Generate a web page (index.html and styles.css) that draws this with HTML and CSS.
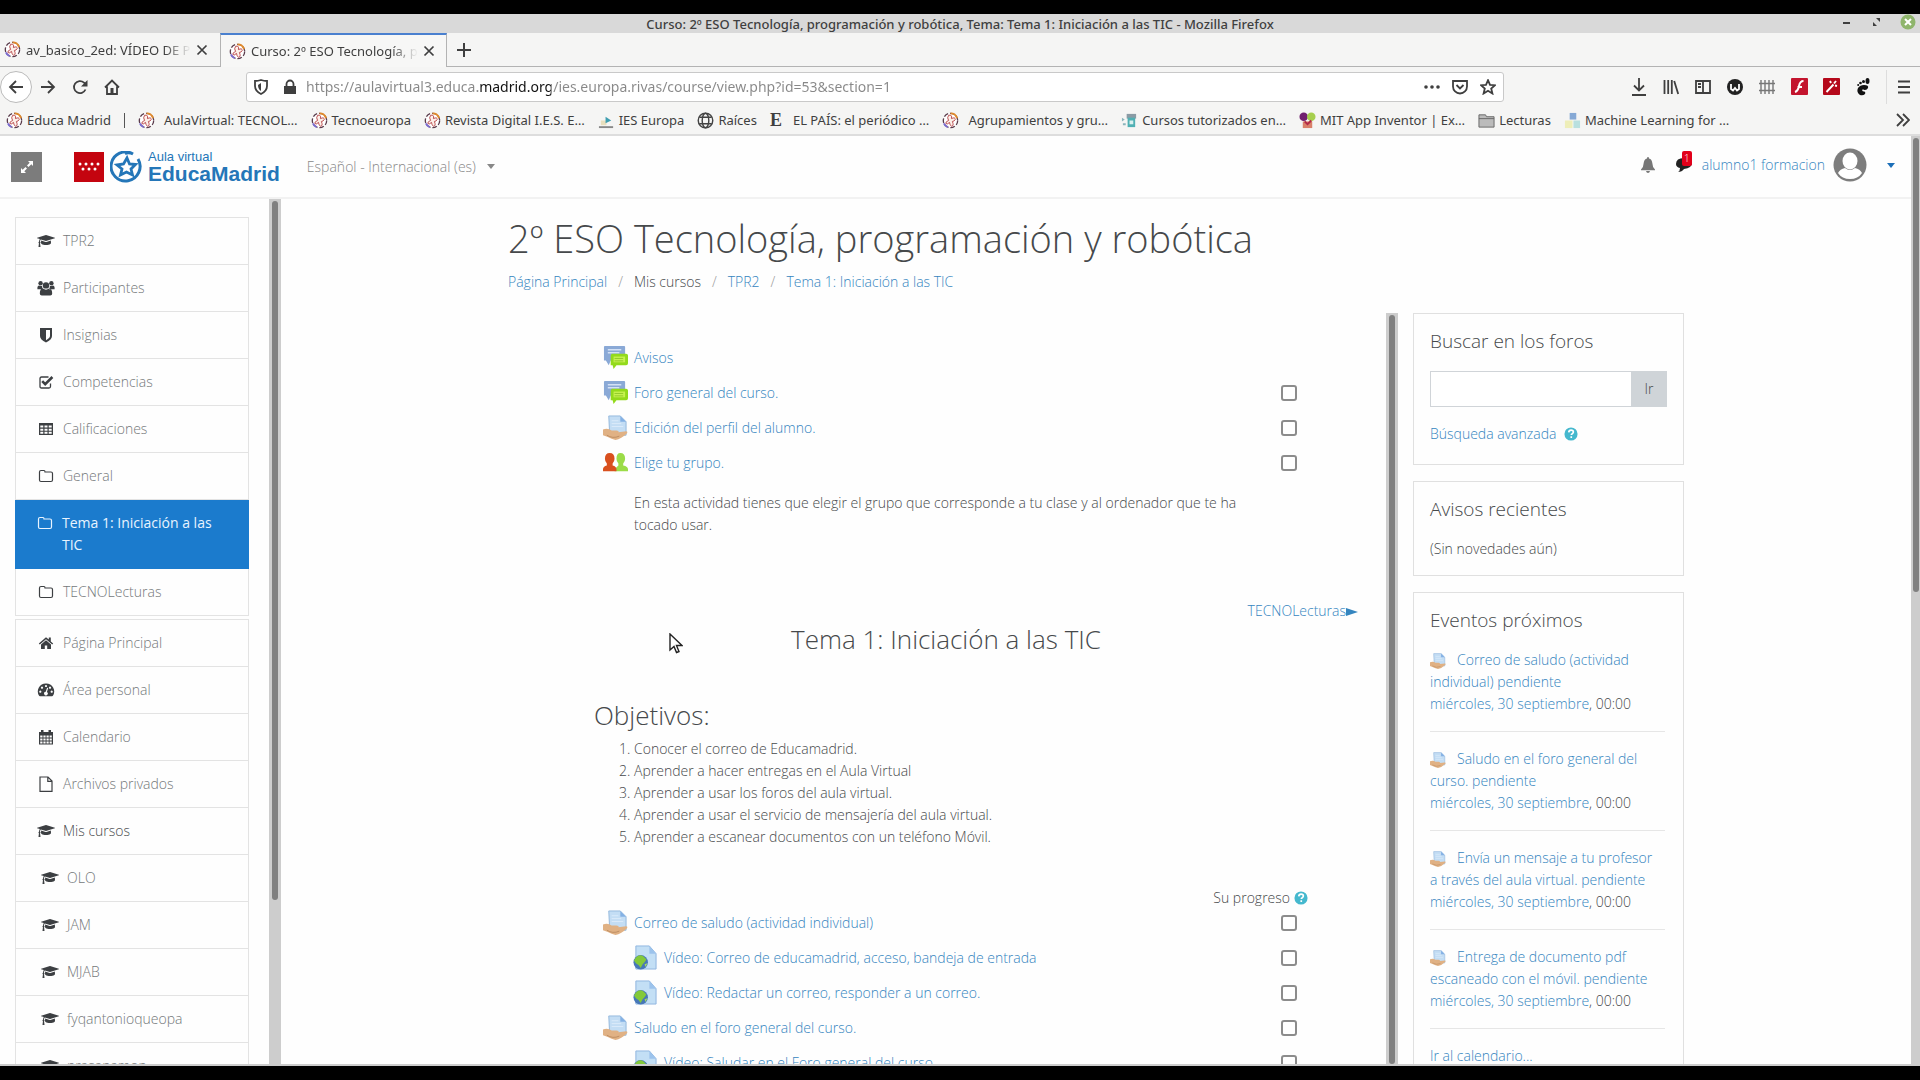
FILE: index.html
```html
<!DOCTYPE html>
<html lang="es">
<head>
    <meta charset="UTF-8">
    <meta name="viewport" content="width=device-width, initial-scale=1.0">
    <title>Curso: 2º ESO Tecnología, programación y robótica, Tema: Tema 1: Iniciación a las TIC</title>
    <link rel="stylesheet" href="styles.css">
</head>
<body>
<!-- iconos -->
<svg class="sprite" aria-hidden="true">
    <symbol id="i-cap" viewBox="0 0 2304 1792"><path d="M1774 836l18 316q4 69-82 128t-235 93.500-323 34.500-323-34.500-235-93.500-82-128l18-316 574 181q22 7 48 7t48-7zM2304 512q0 23-22 31l-1120 352q-4 1-10 1t-10-1l-652-206q-43 34-71 111.500t-34 178.500q63 36 63 109 0 69-58 107l58 433q2 14-8 25-9 11-24 11h-192q-15 0-24-11-10-11-8-25l58-433q-58-38-58-107 0-73 65-111 11-207 98-330l-333-104q-22-8-22-31t22-31l1120-352q4-1 10-1t10 1l1120 352q22 8 22 31z"/></symbol>
    <symbol id="i-users" viewBox="0 0 18 16"><circle cx="3.600" cy="3.200" r="2.200"/><circle cx="14.400" cy="3.200" r="2.200"/><circle cx="9" cy="5.400" r="3.200"/><path d="M.4 9.400V7.600Q.6 5.400 2.200 5.400q1.200 1 2.900.5-.1 2 1 3.300H.4zM17.600 9.400V7.600q-.2-2.200-1.800-2.200-1.200 1-2.900.5.100 2-1 3.300h5.700zM2.800 13.600q0-4.800 3.100-5 3.100 2.200 6.200 0 3.100.2 3.100 5 0 2-2 2H4.800q-2 0-2-2z"/></symbol>
    <symbol id="i-shield" viewBox="0 0 16 16"><path fill-rule="evenodd" d="M2 1h12v8q0 3.500-6 6.500Q2 12.500 2 9zM8 3v10.200q4-2.200 4-4.200V3z"/></symbol>
    <symbol id="i-check" viewBox="0 0 16 16"><path d="M12.500 9.500v3q0 1.500-1.500 1.500H3.500Q2 14 2 12.500V4.500Q2 3 3.500 3h7" fill="none" stroke="currentColor" stroke-width="1.300"/><path d="M4.200 7.200l3 3L14.400 3" fill="none" stroke="currentColor" stroke-width="2.600"/></symbol>
    <symbol id="i-table" viewBox="0 0 16 16"><path fill-rule="evenodd" d="M1 2h14v12H1zM2.300 4.600v2h3v-2zm4.200 0v2h3v-2zm4.200 0v2h3v-2zM2.300 7.700v2h3v-2zm4.200 0v2h3v-2zm4.200 0v2h3v-2zM2.300 10.800v2h3v-2zm4.200 0v2h3v-2zm4.200 0v2h3v-2z"/></symbol>
    <symbol id="i-folder" viewBox="0 0 16 16"><path d="M1.500 4q0-1.500 1.500-1.500h3Q7 2.500 7 4h6q1.500 0 1.500 1.500V12q0 1.500-1.500 1.500H3Q1.500 13.500 1.500 12z" fill="none" stroke="currentColor" stroke-width="1.200"/></symbol>
    <symbol id="i-home" viewBox="0 0 16 16"><path d="M8 2.200L.8 8.600l1 1L8 4.200l6.200 5.400 1-1-2.400-2.200V2.600h-2v2zM8 5.300L3 9.600V14h3.800v-3.600h2.400V14H13V9.600z"/></symbol>
    <symbol id="i-dash" viewBox="0 0 18 16"><path fill-rule="evenodd" d="M9 1.500a8 8 0 0 1 6.900 12.300q-.3.400-.8.400H2.900q-.5 0-.8-.4A8 8 0 0 1 9 1.500zM9 2.900a1.100 1.100 0 1 0 .01 0zM5 4.600a1.100 1.100 0 1 0 .01 0zM13 4.600a1.100 1.100 0 1 0 .01 0zM3.300 8.600a1.100 1.100 0 1 0 .01 0zM14.700 8.600a1.100 1.100 0 1 0 .01 0zM10.100 5.800L8.700 9.700A1.800 1.800 0 1 0 9.900 10l1.300-3.900z"/></symbol>
    <symbol id="i-cal" viewBox="0 0 16 16"><path fill-rule="evenodd" d="M1 3h2V1h2.500v2h5V1H13v2h2v12.500H1zM2.200 6.400v2h2.300v-2zm3.200 0v2h2.200v-2zm3.100 0v2h2.200v-2zm3.100 0v2h2.200v-2zM2.200 9.400v2h2.300v-2zm3.200 0v2h2.200v-2zm3.100 0v2h2.200v-2zm3.100 0v2h2.200v-2zM2.200 12.400v2h2.300v-2zm3.200 0v2h2.200v-2zm3.100 0v2h2.200v-2zm3.100 0v2h2.200v-2z"/></symbol>
    <symbol id="i-file" viewBox="0 0 16 16"><path d="M2 1h8l4 4v10.300H2zM9.800 1v4.300H14" fill="none" stroke="currentColor" stroke-width="1.200"/></symbol>
    <symbol id="i-forum" viewBox="0 0 26 24"><path d="M2 0h20q1 0 1 1v14H8l-2 5-3-5H1V1q0-1 1-1z" fill="#8aa9d6"/><path d="M5 4h14M5 7h12" stroke="#d3e1f5" stroke-width="1.500"/><path d="M9 8h15q2 0 2 2v8q0 2-2 2H14l-3 4-1-4H8V10z" fill="#93da1c"/><path d="M11 11h12v6H11z" fill="#c6f250"/><path d="M12 13h9M12 15.500h9" stroke="#8fc92a"/></symbol>
    <symbol id="i-assign" viewBox="0 0 26 26"><path d="M6 1h12l6 6v14H7z" fill="#c3ddf4" stroke="#93b7dc"/><path d="M18 1v6h6z" fill="#84b1e4"/><path d="M9 6h7M9 9h10M9 12h12" stroke="#dcebfa"/><path d="M0 15q5-2 9 1h5q3 0 2 2l8-1q2 0 1 2-6 6-12 7-4-1-8-3l-5-2z" fill="#e0b184"/><path d="M4 21q6 4 13 1" stroke="#bd8e63" fill="none"/></symbol>
    <symbol id="i-url" viewBox="0 0 26 26"><path d="M3 1h14l7 8v16H3z" fill="#c3dff5" stroke="#8fb4df"/><path d="M17 1v8h7z" fill="#9cc3ec"/><circle cx="8" cy="18" r="7.500" fill="#4777b8"/><path d="M3 13q4-4 8-1l3 3-2 3-2 2-2 4-2-3-3-2-2-3z" fill="#83c93a"/><path d="M12 20l3-1-2 4z" fill="#a7dd5c"/></symbol>
    <symbol id="i-groups" viewBox="0 0 26 20"><path d="M18 0q5 0 5 6 0 3-2 5v2q5 1 5 4v2H12v-2l4-4v-2q-2-2-2-5 0-6 4-6z" fill="#9bdc48"/><path d="M7 0q5 0 5 6 0 3-2 5v2q4 1 4 4v2H0v-2q0-3 4-4v-2Q2 9 2 6q0-6 5-6z" fill="#d9501e"/></symbol>
    <symbol id="i-help" viewBox="0 0 16 16"><circle cx="8" cy="8" r="7.500" fill="#45b8ce"/><path d="M5.400 6.200q.2-2.600 2.700-2.600 2.600 0 2.600 2.200 0 1.200-1.300 1.900-1 .5-1 1.500M8.300 10.600v2" fill="none" stroke="#fff" stroke-width="1.900"/></symbol>
    <symbol id="i-fav" viewBox="0 0 18 18"><circle cx="9" cy="9" r="7.600" fill="#fff" stroke="#5a3c4c" stroke-width="1.400" stroke-dasharray="5 2"/><path d="M9 1.500a7.500 7.500 0 0 1 7 5" fill="none" stroke="#e08a2c" stroke-width="2"/><path d="M2 12a7.500 7.500 0 0 0 4 4" fill="none" stroke="#7a6bd0" stroke-width="2"/><path d="M7 3.500q4-1 3 3.500 4-2 4 1-1 2-3 2 2 5-1 5-2-1-2-4-3 3-4 1 0-2 3-3-2-3 0-5.500z" fill="#fdf1ea" stroke="#b8474a" stroke-width="1"/></symbol>
    <symbol id="i-caret" viewBox="0 0 8 5"><path d="M0 0h8L4 5z"/></symbol>
    <symbol id="i-x" viewBox="0 0 12 12"><path d="M1.500 1.500l9 9m0-9l-9 9" fill="none" stroke="currentColor" stroke-width="1.700"/></symbol>
</svg>

<div class="titlebar">
    <span class="titlebar-text">Curso: 2º ESO Tecnología, programación y robótica, Tema: Tema 1: Iniciación a las TIC - Mozilla Firefox</span>
    <div class="win-buttons">
        <button aria-label="Minimizar"><svg width="14" height="14" viewBox="0 0 14 14"><path d="M3 7h7v2H3z"/></svg></button>
        <button aria-label="Restaurar"><svg width="14" height="14" viewBox="0 0 14 14"><path d="M6 3h4v4zM3 7v4h4z"/></svg></button>
        <button aria-label="Cerrar"><svg width="16" height="16" viewBox="0 0 16 16"><circle cx="8" cy="8" r="7.500" fill="#8fb56c"/><path d="M5 5l6 6m0-6l-6 6" stroke="#fff" stroke-width="2"/></svg></button>
    </div>
</div>

<div class="tabs">
    <div class="tab">
        <svg class="fav"><use href="#i-fav"/></svg>
        <span class="tab-title">av_basico_2ed: VÍDEO DE P</span>
        <button aria-label="Cerrar pestaña"><svg width="12" height="12"><use href="#i-x"/></svg></button>
    </div>
    <div class="tab tab-active">
        <svg class="fav"><use href="#i-fav"/></svg>
        <span class="tab-title">Curso: 2º ESO Tecnología, p</span>
        <button aria-label="Cerrar pestaña"><svg width="12" height="12"><use href="#i-x"/></svg></button>
    </div>
    <button class="tab-new" aria-label="Nueva pestaña"><svg width="14" height="14" viewBox="0 0 14 14"><path d="M7 0v14M0 7h14" stroke="currentColor" stroke-width="2"/></svg></button>
</div>

<div class="toolbar">
    <div class="nav-buttons">
        <button class="back" aria-label="Atrás"><svg width="16" height="16" viewBox="0 0 16 16"><path d="M15 8H2m6-6L2 8l6 6" class="ln"/></svg></button>
        <button aria-label="Adelante"><svg width="16" height="16" viewBox="0 0 16 16"><path d="M1 8h13M8 2l6 6-6 6" class="ln"/></svg></button>
        <button aria-label="Recargar"><svg width="16" height="16" viewBox="0 0 16 16"><path d="M13.500 10.500A6 6 0 1 1 12 3.600L14 5.500" class="ln"/><path d="M15.500 1v6.500H9z"/></svg></button>
        <button aria-label="Inicio"><svg width="16" height="16" viewBox="0 0 16 16"><path d="M1 8.500L8 1.500l7 7M3 7.500V15h10V7.500" class="ln"/><path d="M6.500 9h3v6h-3z"/></svg></button>
    </div>
    <div class="urlbar">
        <svg class="shield" width="14" height="16" viewBox="0 0 14 16"><path d="M1 2q3 0 6-1 3 1 6 1v5q0 5-6 8-6-3-6-8z" class="ln"/><path d="M7 4v8Q4 10 4 6z"/></svg>
        <svg class="lock" width="14" height="16" viewBox="0 0 14 16"><path d="M1 7h12v8H1z"/><path d="M3.500 8V5a3.500 3.500 0 0 1 7 0v3" class="ln"/></svg>
        <input type="text" aria-label="Dirección" value="https://aulavirtual3.educa.madrid.org/ies.europa.rivas/course/view.php?id=53&amp;section=1">
        <div class="url-actions">
            <button aria-label="Acciones de página"><svg width="16" height="16" viewBox="0 0 16 16"><circle cx="2" cy="8" r="1.800"/><circle cx="8" cy="8" r="1.800"/><circle cx="14" cy="8" r="1.800"/></svg></button>
            <button aria-label="Pocket"><svg width="16" height="16" viewBox="0 0 16 16"><path d="M1 2h14v5.500a7 7 0 0 1-14 0zM4.500 6L8 9.500 11.500 6" class="ln"/></svg></button>
            <button aria-label="Marcador"><svg width="16" height="16" viewBox="0 0 16 16"><path d="M8 1.200l2 4.600 5 .4-3.800 3.300 1.200 5L8 11.800l-4.400 2.700 1.200-5L1 6.200l5-.4z" class="ln"/></svg></button>
        </div>
    </div>
    <div class="ext-buttons">
        <button aria-label="Descargas"><svg width="16" height="18" viewBox="0 0 16 18"><path d="M8 0v12M3 7.500l5 5 5-5M1 17h14" class="ln"/></svg></button>
        <button aria-label="Biblioteca"><svg width="16" height="16" viewBox="0 0 16 16"><path d="M1.500 1v14M5.200 1v14M8.800 1v14M11.200 2l4 13" class="ln"/></svg></button>
        <button aria-label="Barras laterales"><svg width="16" height="16" viewBox="0 0 16 16"><path d="M1 2h14v12H1zM8 2v12M3 5h3M3 8h3" class="ln"/></svg></button>
        <button aria-label="Complemento"><svg width="18" height="18" viewBox="0 0 18 18"><circle cx="9" cy="9" r="8" fill="#222"/><path d="M5 6v5l2 1.500L9 10l2 2.500 2-1.500V6" fill="none" stroke="#fff" stroke-width="1.800"/></svg></button>
        <button aria-label="Contenedores"><svg width="16" height="16" viewBox="0 0 16 16"><path d="M2 1v14M6 1v14M10 1v14M14 1v14M0 4.500h16M0 11.500h16" stroke="#777" stroke-width="1.400"/></svg></button>
        <button aria-label="Flash"><svg width="17" height="17" viewBox="0 0 17 17"><rect width="17" height="17" rx="1" fill="#c3142d"/><path d="M12.500 3Q9 3 8 8t-4 6M6.500 9h4.500" fill="none" stroke="#fff" stroke-width="2"/></svg></button>
        <button aria-label="Varita"><svg width="17" height="17" viewBox="0 0 17 17"><rect width="17" height="17" rx="1" fill="#b5091b"/><path d="M3.500 14l7-7.500M7 3l1 2M13 3l-2 2.500M14 8l-2-.5" stroke="#fff" stroke-width="1.900"/></svg></button>
        <button aria-label="GNOME"><svg width="16" height="18" viewBox="0 0 16 18"><g fill="#111"><path d="M9 7q5 0 4 3-1 2-3 2-2 0-2-1-2 2 1 2.500 2 .5 1 2.500-2 2-5 1-4-3-2-7 2-3 6-3z"/><ellipse cx="12.500" cy="3" rx="2" ry="3"/><circle cx="8.500" cy="3.500" r="1.500"/><circle cx="5.500" cy="5" r="1.300"/><circle cx="3.200" cy="7" r="1"/></g></svg></button>
        <button class="menu" aria-label="Menú"><svg width="14" height="14" viewBox="0 0 14 14"><path d="M1 1.500h12M1 7h12M1 12.500h12" class="ln"/></svg></button>
    </div>
</div>

<nav class="bookmarks">
    <a href="#"><svg class="fav"><use href="#i-fav"/></svg>Educa Madrid</a>
    <span class="bm-sep"></span>
    <a href="#" class="bm-wide"><svg class="fav"><use href="#i-fav"/></svg>AulaVirtual: TECNOL…</a>
    <a href="#"><svg class="fav"><use href="#i-fav"/></svg>Tecnoeuropa</a>
    <a href="#"><svg class="fav"><use href="#i-fav"/></svg>Revista Digital I.E.S. E…</a>
    <a href="#"><svg class="fav" viewBox="0 0 18 18"><path d="M1 15h15v2H1z" fill="#888"/><path d="M3 9h6v5H3z" fill="#e8dfbd"/><path d="M8 5l6 4-6 3z" fill="#3f9eb0"/></svg>IES Europa</a>
    <a href="#"><svg class="fav" viewBox="0 0 18 18"><g fill="none" stroke="#444" stroke-width="1.500"><circle cx="9" cy="9" r="7.700"/><ellipse cx="9" cy="9" rx="3.500" ry="7.700"/><path d="M2.500 5.500h13M2.500 12.500h13"/></g></svg>Raíces</a>
    <a href="#" class="bm-wide"><b class="bm-e">E</b>EL PAÍS: el periódico …</a>
    <a href="#" class="bm-wide"><svg class="fav"><use href="#i-fav"/></svg>Agrupamientos y gru…</a>
    <a href="#"><svg class="fav" viewBox="0 0 18 18"><path d="M6 2h10v5H6z" fill="#8a9ba5"/><path d="M7 6h8v10H7z" fill="#4fb0b3"/><path d="M1 6l3 2-3 2zM2 12h3v2H2z" fill="#8ab5bb"/><path d="M9 9h4v4H9z" fill="#d9f0ef"/></svg>Cursos tutorizados en…</a>
    <a href="#"><svg class="fav" viewBox="0 0 18 18"><circle cx="5" cy="5" r="4.500" fill="#70206e"/><circle cx="13" cy="5" r="4.500" fill="#a6cf4e"/><path d="M4 10h10v7H4z" fill="#d9806a"/><path d="M6 10l3 3 4-4" stroke="#b12a48" stroke-width="2" fill="none"/></svg>MIT App Inventor | Ex…</a>
    <a href="#"><svg class="fav" viewBox="0 0 18 18"><path d="M1 3h7l1 2h8v11H1z" fill="#bbb" stroke="#666"/><path d="M1 7h16" stroke="#666"/></svg>Lecturas</a>
    <a href="#"><svg class="fav" viewBox="0 0 18 18"><path d="M6 1h7v7H6z" fill="#86a9d5"/><path d="M1 9h8v8H1z" fill="#eeeeb8"/><path d="M10 9h7v8h-7z" fill="#b9e0df"/></svg>Machine Learning for …</a>
    <button class="bm-more" aria-label="Más marcadores"><svg width="14" height="14" viewBox="0 0 14 14"><path d="M1 1l6 6-6 6M7 1l6 6-6 6" class="ln"/></svg></button>
</nav>

<div class="viewport">
    <div class="page">
        <header class="page-header">
            <button class="full" aria-label="Pantalla completa"><svg width="16" height="16" viewBox="0 0 16 16"><path d="M9 2h5v5l-1.700-1.700L9.500 8 8 6.500l2.700-2.800zM7 14H2V9l1.700 1.700L6.500 8 8 9.500l-2.700 2.800z" fill="#fff"/></svg></button>
            <a href="#" class="logo">
                <svg width="30" height="30" viewBox="0 0 30 30"><path d="M0 0h30v30H0z" fill="#c4040f"/><g fill="#fff"><circle cx="6" cy="12" r="1.500"/><circle cx="12" cy="12" r="1.500"/><circle cx="18" cy="12" r="1.500"/><circle cx="24" cy="12" r="1.500"/><circle cx="9" cy="17" r="1.500"/><circle cx="15" cy="17" r="1.500"/><circle cx="21" cy="17" r="1.500"/></g></svg>
                <svg width="32" height="32" viewBox="0 0 32 32"><g fill="none" stroke="#2476b8"><path d="M28 8a14.500 14.500 0 1 1-5-5q-4-2-8-.5" stroke-width="3"/><path d="M17 7l2.500 6 6 .5-4.500 4.500 1.500 6-6-3-6 3 1.500-6-5-4 6.500-1z" stroke-width="2.800"/></g></svg>
                <span class="logo-text"><span class="logo-top">Aula virtual</span><span class="logo-name">EducaMadrid</span></span>
            </a>
            <div class="lang">
                <select aria-label="Idioma"><option>Español - Internacional (es)</option></select>
                <svg width="8" height="5"><use href="#i-caret"/></svg>
            </div>
            <div class="user">
                <button aria-label="Notificaciones"><svg width="16" height="16" viewBox="0 0 16 16"><path d="M8 0q1 0 1 1.400 3 .8 3.300 4.600Q12.500 10.500 15 12.500v.8H1v-.8Q3.500 10.500 3.700 6 4 2.200 7 1.400 7 0 8 0zM6 14h4q-.5 2-2 2t-2-2z" fill="#777"/></svg></button>
                <button class="msg" aria-label="Mensajes"><svg width="16" height="16" viewBox="0 0 16 16"><path d="M8 1q8 0 8 5t-8 6q-2 3-6 3 2-1 2-4-4-1-4-4 0-6 8-6z" fill="#222"/></svg><span class="badge">1</span></button>
                <a href="#">alumno1 formacion</a>
                <svg width="34" height="34" viewBox="0 0 34 34"><circle cx="17" cy="17" r="16.500" fill="#7d7d7d"/><ellipse cx="17" cy="13" rx="7.500" ry="8.500" fill="#fff"/><path d="M5 25q2-4 7-5 5 4 10 0 5 1 7 5-4 6-12 6T5 25z" fill="#fff"/></svg>
                <button class="user-menu" aria-label="Menú de usuario"><svg width="8" height="5"><use href="#i-caret"/></svg></button>
            </div>
        </header>

        <div class="body-row">
            <aside class="drawer">
                <ul class="nav-list">
                    <li><a href="#"><svg><use href="#i-cap"/></svg>TPR2</a></li>
                    <li><a href="#"><svg><use href="#i-users"/></svg>Participantes</a></li>
                    <li><a href="#"><svg><use href="#i-shield"/></svg>Insignias</a></li>
                    <li><a href="#"><svg><use href="#i-check"/></svg>Competencias</a></li>
                    <li><a href="#"><svg><use href="#i-table"/></svg>Calificaciones</a></li>
                    <li><a href="#"><svg><use href="#i-folder"/></svg>General</a></li>
                    <li class="active"><a href="#"><svg><use href="#i-folder"/></svg>Tema 1: Iniciación a las TIC</a></li>
                    <li><a href="#"><svg><use href="#i-folder"/></svg>TECNOLecturas</a></li>
                </ul>
                <ul class="nav-list">
                    <li><a href="#"><svg><use href="#i-home"/></svg>Página Principal</a></li>
                    <li><a href="#"><svg><use href="#i-dash"/></svg>Área personal</a></li>
                    <li><a href="#"><svg><use href="#i-cal"/></svg>Calendario</a></li>
                    <li><a href="#"><svg><use href="#i-file"/></svg>Archivos privados</a></li>
                    <li class="parent"><a href="#"><svg><use href="#i-cap"/></svg>Mis cursos</a></li>
                    <li class="child"><a href="#"><svg><use href="#i-cap"/></svg>OLO</a></li>
                    <li class="child"><a href="#"><svg><use href="#i-cap"/></svg>JAM</a></li>
                    <li class="child"><a href="#"><svg><use href="#i-cap"/></svg>MJAB</a></li>
                    <li class="child"><a href="#"><svg><use href="#i-cap"/></svg>fyqantonioqueopa</a></li>
                    <li class="child"><a href="#"><svg><use href="#i-cap"/></svg>prasanamon</a></li>
                </ul>
            </aside>
            <div class="track"><div class="thumb thumb-drawer"></div></div>

            <main class="main">
                <h1>2º ESO Tecnología, programación y robótica</h1>
                <ol class="crumbs">
                    <li><a href="#">Página Principal</a></li>
                    <li>Mis cursos</li>
                    <li><a href="#">TPR2</a></li>
                    <li><a href="#">Tema 1: Iniciación a las TIC</a></li>
                </ol>

                <div class="columns">
                    <section class="course">
                        <ul class="activities">
                            <li><svg><use href="#i-forum"/></svg><a href="#">Avisos</a></li>
                            <li><svg><use href="#i-forum"/></svg><a href="#">Foro general del curso.</a><input type="checkbox" aria-label="Foro general del curso."></li>
                            <li><svg><use href="#i-assign"/></svg><a href="#">Edición del perfil del alumno.</a><input type="checkbox" aria-label="Edición del perfil del alumno."></li>
                            <li><svg><use href="#i-groups"/></svg><a href="#">Elige tu grupo.</a><input type="checkbox" aria-label="Elige tu grupo."></li>
                        </ul>
                        <p class="activity-text">En esta actividad tienes que elegir el grupo que corresponde a tu clase y al ordenador que te ha tocado usar.</p>

                        <div class="section-nav"><a href="#">TECNOLecturas<svg width="12" height="8" viewBox="0 0 12 8"><path d="M0 0l12 4-12 4z"/></svg></a></div>
                        <h2 class="section-title">Tema 1: Iniciación a las TIC</h2>

                        <h3>Objetivos:</h3>
                        <ol class="goals">
                            <li>Conocer el correo de Educamadrid.</li>
                            <li>Aprender a hacer entregas en el Aula Virtual</li>
                            <li>Aprender a usar los foros del aula virtual.</li>
                            <li>Aprender a usar el servicio de mensajería del aula virtual.</li>
                            <li>Aprender a escanear documentos con un teléfono Móvil.</li>
                        </ol>

                        <div class="progress">Su progreso <svg class="help"><use href="#i-help"/></svg></div>
                        <ul class="activities">
                            <li><svg><use href="#i-assign"/></svg><a href="#">Correo de saludo (actividad individual)</a><input type="checkbox" aria-label="Correo de saludo"></li>
                            <li class="indent"><svg><use href="#i-url"/></svg><a href="#">Vídeo: Correo de educamadrid, acceso, bandeja de entrada</a><input type="checkbox" aria-label="Vídeo: Correo de educamadrid"></li>
                            <li class="indent"><svg><use href="#i-url"/></svg><a href="#">Vídeo: Redactar un correo, responder a un correo.</a><input type="checkbox" aria-label="Vídeo: Redactar un correo"></li>
                            <li><svg><use href="#i-assign"/></svg><a href="#">Saludo en el foro general del curso.</a><input type="checkbox" aria-label="Saludo en el foro"></li>
                            <li class="indent"><svg><use href="#i-url"/></svg><a href="#">Vídeo: Saludar en el Foro general del curso.</a><input type="checkbox" aria-label="Vídeo: Saludar en el Foro"></li>
                        </ul>
                    </section>
                    <div class="track"><div class="thumb"></div></div>

                    <aside class="blocks">
                        <section class="block">
                            <h4>Buscar en los foros</h4>
                            <form class="search">
                                <input type="text" aria-label="Buscar">
                                <button type="button">Ir</button>
                            </form>
                            <p class="advanced"><a href="#">Búsqueda avanzada</a> <svg class="help"><use href="#i-help"/></svg></p>
                        </section>
                        <section class="block">
                            <h4>Avisos recientes</h4>
                            <p>(Sin novedades aún)</p>
                        </section>
                        <section class="block">
                            <h4>Eventos próximos</h4>
                            <div class="event"><svg><use href="#i-assign"/></svg><a href="#">Correo de saludo (actividad individual) pendiente</a><br><a href="#">miércoles, 30 septiembre</a>, 00:00</div>
                            <div class="event"><svg><use href="#i-assign"/></svg><a href="#">Saludo en el foro general del curso. pendiente</a><br><a href="#">miércoles, 30 septiembre</a>, 00:00</div>
                            <div class="event"><svg><use href="#i-assign"/></svg><a href="#">Envía un mensaje a tu profesor a través del aula virtual. pendiente</a><br><a href="#">miércoles, 30 septiembre</a>, 00:00</div>
                            <div class="event"><svg><use href="#i-assign"/></svg><a href="#">Entrega de documento pdf escaneado con el móvil. pendiente</a><br><a href="#">miércoles, 30 septiembre</a>, 00:00</div>
                            <p><a href="#">Ir al calendario...</a></p>
                        </section>
                    </aside>
                </div>
            </main>
        </div>
    </div>
    <div class="track track-page"><div class="thumb thumb-page"></div></div>
</div>

<svg class="cursor" width="14" height="21" viewBox="0 0 14 21"><path d="M1 1v16l4-3.500 2.500 6 2.500-1-2.500-6H13z" fill="#fff" stroke="#222" stroke-width="1.400"/></svg>
</body>
</html>
```

FILE: styles.css
```css
* {
    box-sizing: border-box;
}
body {
    margin: 0;
    padding: 14px 0;
    height: 100vh;
    display: flex;
    flex-direction: column;
    overflow: hidden;
    background: #000;
    color: #46494b;
    font-family: "Open Sans", "Noto Sans", sans-serif;
    font-weight: 300;
    font-size: 14px;
    line-height: 22px;
}
a {
    color: #3585bf;
    text-decoration: none;
}
button {
    display: flex;
    align-items: center;
    justify-content: center;
    margin: 0;
    padding: 0;
    border: 0;
    background: none;
    color: inherit;
    font: inherit;
}
ul, ol, p, h1, h2, h3, h4 {
    margin: 0;
    padding: 0;
    font-weight: 300;
}
ul {
    list-style: none;
}
svg {
    flex: none;
    fill: currentColor;
}
.ln {
    fill: none;
    stroke: currentColor;
    stroke-width: 1.8;
}
.sprite {
    position: absolute;
    width: 0;
    height: 0;
}
.fav {
    width: 17px;
    height: 17px;
}

/* navegador */
.titlebar, .tabs, .toolbar, .bookmarks {
    flex: none;
    display: flex;
    align-items: center;
    background: #f5f5f4;
    color: #3f3f3f;
    font-family: "Noto Sans", sans-serif;
    font-weight: 400;
    font-size: 13px;
    line-height: 18px;
}
.titlebar {
    height: 19px;
    background: #d9d9d9;
    justify-content: center;
    font-weight: 500;
    position: relative;
}
.win-buttons {
    position: absolute;
    right: 4px;
    top: 0;
    display: flex;
    gap: 16px;
}
.tabs {
    height: 34px;
    align-items: stretch;
    border-bottom: 1px solid #b3b3b3;
}
.tab {
    width: 220px;
    display: flex;
    align-items: center;
    gap: 5px;
    padding: 0 12px 0 4px;
}
.tab-title {
    flex: 1;
    white-space: nowrap;
    -webkit-mask-image: linear-gradient(to right, #000 84%, transparent);
    mask-image: linear-gradient(to right, #000 84%, transparent);
}
.tab-active {
    width: 227px;
    margin-bottom: -1px;
    padding-left: 8px;
    background: #f7f7f6;
    border: 1px solid #b3b3b3;
    border-top: 2px solid #4a80cf;
    border-bottom: 0;
}
.tab-new {
    width: 34px;
}
.toolbar {
    height: 39px;
}
.nav-buttons {
    display: flex;
    align-items: center;
    width: 246px;
}
.nav-buttons button {
    width: 32px;
    height: 32px;
}
.nav-buttons .back {
    border: 1px solid #bbb;
    border-radius: 50%;
    background: #fff;
}
.urlbar {
    flex: 1;
    max-width: 1258px;
    display: flex;
    align-items: center;
    height: 30px;
    padding: 0 7px;
    background: #fff;
    border: 1px solid #c9c9c9;
    border-radius: 3px;
}
.urlbar .shield {
    margin-right: 15px;
}
.urlbar .lock {
    margin-right: 9px;
}
/* el dominio va en negro, el resto en gris */
.urlbar input {
    flex: 1;
    height: 24px;
    padding: 0;
    border: 0;
    outline: 0;
    font: 14px/24px "Noto Sans", sans-serif;
    color: transparent;
    background: linear-gradient(to right, #888 172px, #111 172px, #111 245px, #888 245px);
    -webkit-background-clip: text;
    background-clip: text;
}
.url-actions {
    display: flex;
    gap: 12px;
}
.ext-buttons {
    margin-left: auto;
    display: flex;
}
.ext-buttons button {
    width: 32px;
    height: 34px;
}
.ext-buttons .menu {
    width: 34px;
    margin-left: 7px;
    border-left: 1px solid #ddd;
}
.bookmarks {
    height: 30px;
    gap: 13px;
    padding: 0 10px 0 6px;
    border-bottom: 2px solid #ddd;
}
.bookmarks a {
    display: flex;
    align-items: center;
    gap: 4px;
    color: inherit;
    white-space: nowrap;
}
.bookmarks .bm-wide {
    gap: 9px;
}
.bm-sep {
    width: 1px;
    height: 15px;
    background: #555;
}
.bm-e {
    width: 14px;
    font: 900 18px/18px "Liberation Serif", serif;
}
.bm-more {
    margin-left: auto;
}

/* pagina */
.viewport {
    flex: 1;
    min-height: 0;
    display: flex;
    background: #fefefe;
    border-bottom: 2px solid #ccc;
}
.page {
    flex: 1;
    display: flex;
    flex-direction: column;
    min-width: 0;
}
.page-header {
    flex: none;
    height: 63px;
    display: flex;
    align-items: center;
    padding: 0 16px 0 11px;
    border-bottom: 2px solid #f2f2f2;
}
.full {
    width: 31px;
    height: 30px;
    margin-right: 32px;
    background: #7c7c7c;
}
.logo {
    display: flex;
    align-items: center;
    gap: 6px;
    color: #2476b8;
}
.logo-text {
    display: flex;
    flex-direction: column;
    font-family: "Liberation Sans", Arial, sans-serif;
    font-weight: 400;
}
.logo-top {
    font-size: 13px;
    line-height: 14px;
}
.logo-name {
    font-weight: 700;
    font-size: 21px;
    line-height: 20px;
}
.lang {
    display: flex;
    align-items: center;
    gap: 10px;
    margin-left: 27px;
    color: #888;
}
.lang select {
    appearance: none;
    padding: 0;
    border: 0;
    background: none;
    color: #888;
    font: inherit;
}
.user {
    display: flex;
    align-items: center;
    gap: 8px;
    margin-left: auto;
    padding-bottom: 3px;
}
.user .msg {
    position: relative;
    margin: 0 2px 0 12px;
}
.badge {
    position: absolute;
    top: -6px;
    right: 0;
    width: 10px;
    height: 15px;
    border-radius: 2px;
    background: #e2001a;
    color: #fff;
    font-size: 10px;
    line-height: 15px;
}
.user-menu {
    margin-left: 12px;
    color: #1c6fb8;
}
.body-row {
    flex: 1;
    min-height: 0;
    display: flex;
    overflow: hidden;
}
.drawer {
    width: 269px;
    padding: 18px 20px 0 15px;
}
.nav-list {
    margin-bottom: 3px;
    border: 1px solid #e3e3e3;
    border-bottom: 0;
}
.nav-list li {
    border-bottom: 1px solid #e3e3e3;
    padding: 12px 20px 12px 47px;
}
.nav-list a {
    display: block;
    color: #74787a;
}
.nav-list svg {
    float: left;
    width: 18px;
    height: 16px;
    margin: 3px 0 0 -26px;
    color: #3c3f42;
}
.nav-list .active {
    background: #1b7bcd;
    border-color: #1b7bcd;
    margin: 0 -1px;
    font-weight: 400;
}
.nav-list .active a, .nav-list .active svg {
    color: #e8f4ff;
}
.nav-list .parent a {
    color: #46494b;
}
.nav-list .child {
    padding-left: 51px;
}
.track {
    flex: none;
    width: 12px;
    padding-top: 2px;
    background: #cdcdcd;
}
.thumb {
    width: 6px;
    height: 100%;
    margin: 0 auto;
    border-radius: 3px;
    background: #808080;
}
.thumb-drawer {
    height: 81%;
}
.track-page {
    width: 9px;
}
.thumb-page {
    height: 49%;
}
.main {
    flex: 1;
    display: flex;
    flex-direction: column;
    max-width: 1176px;
    margin: 0 auto;
    padding-top: 15px;
}
h1 {
    font-size: 38px;
    line-height: 48px;
}
.crumbs {
    display: flex;
    list-style: none;
    margin: 9px 0 20px;
}
.crumbs li + li::before {
    content: "/";
    padding: 0 11px;
    color: #999;
}
.columns {
    flex: 1;
    min-height: 0;
    display: flex;
}
.course {
    flex: 1;
    padding: 27px 28px 0 86px;
}
.activities {
    padding: 0 61px 0 9px;
}
.activities li {
    height: 35px;
    display: flex;
    align-items: center;
    gap: 6px;
}
.activities svg {
    width: 25px;
    height: 25px;
}
.activities .indent {
    padding-left: 30px;
}
.activities input {
    appearance: none;
    width: 16px;
    height: 16px;
    margin: 0 0 0 auto;
    border: 2px solid #8c8c8c;
    border-radius: 3px;
    background: #fff;
}
.activity-text {
    margin: 12px 80px 64px 40px;
}
.section-nav {
    text-align: right;
}
.section-title {
    margin-bottom: 42px;
    padding-right: 60px;
    font-size: 26px;
    line-height: 34px;
    text-align: center;
}
h3 {
    font-size: 26px;
    line-height: 34px;
}
.goals {
    margin: 6px 0 39px;
    padding-left: 40px;
}
.progress {
    display: flex;
    align-items: center;
    justify-content: flex-end;
    gap: 4px;
    height: 22px;
    margin: 0 50px -4px 0;
}
.help {
    width: 14px;
    height: 14px;
}
.blocks {
    width: 271px;
    margin-left: 15px;
}
.block {
    margin-bottom: 16px;
    padding: 15px 16px;
    border: 1px solid #e0e0e0;
}
.block h4 {
    margin-bottom: 17px;
    font-size: 19px;
    line-height: 24px;
}
.block p {
    display: flex;
    align-items: center;
    gap: 8px;
}
.block .advanced {
    margin-bottom: 4px;
}
.search {
    display: flex;
    height: 36px;
    margin: 18px 0 16px;
}
.search input {
    flex: 1;
    min-width: 0;
    border: 1px solid #d0d4d8;
    border-right: 0;
    background: #fff;
}
.search button {
    width: 36px;
    background: #cfd4d8;
}
.event {
    padding: 0 4px 16px 0;
    margin: 0 2px 16px 0;
    border-bottom: 1px solid #e6e6e6;
}
.event svg {
    width: 16px;
    height: 16px;
    margin-right: 11px;
    vertical-align: middle;
}

/* puntero sobre la pagina */
.cursor {
    position: absolute;
    left: 669px;
    top: 633px;
}
```
